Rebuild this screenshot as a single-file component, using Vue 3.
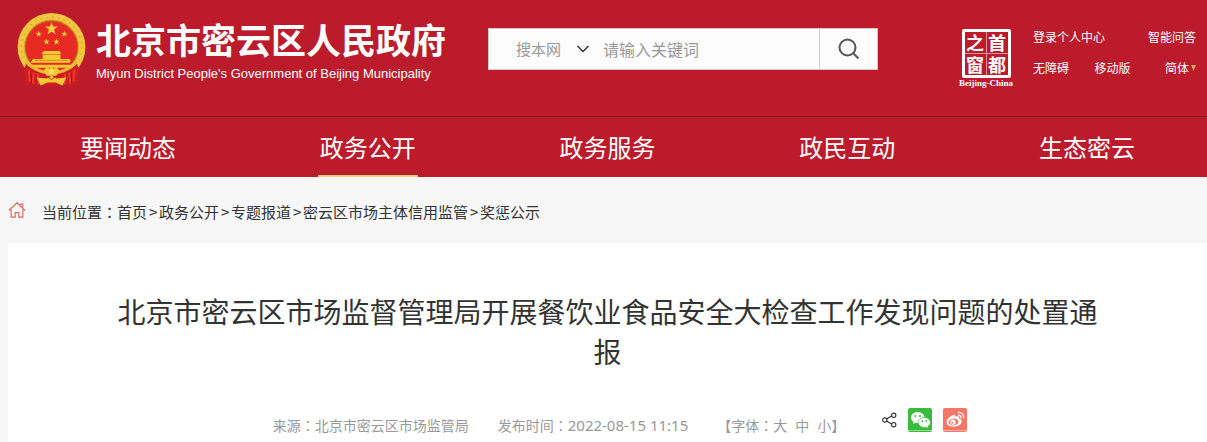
<script setup>
import { ref } from 'vue'

const nav = ['要闻动态', '政务公开', '政务服务', '政民互动', '生态密云']
const active = ref('政务公开')
const crumbs = ['首页', '政务公开', '专题报道', '密云区市场主体信用监管', '奖惩公示']
const keyword = ref('')
</script>

<template>
  <div class="page">
    <header class="header">
      <a class="brand" href="#">
        <svg class="emblem" viewBox="0 0 72 76" aria-hidden="true">
          <circle cx="35" cy="35" r="34.5" fill="#dfa126" />
          <circle cx="35" cy="35" r="31" fill="none" stroke="#f2c843" stroke-width="6" />
          <circle cx="35" cy="35" r="30.5" fill="none" stroke="#e6b035" stroke-width="2" stroke-dasharray="2 4" />
          <circle cx="35" cy="35" r="26.5" fill="#e92a24" stroke="#b76b18" stroke-width="1" />
          <path fill="#f7cf3e" d="M35 9.500l1.600 4.700h5l-4 3.100 1.500 4.900-4.100-3-4.100 3 1.500-4.900-4-3.100h5z" />
          <path id="star" fill="#f7cf3e" d="M22 18.500l.8 2.200h2.300l-1.800 1.500.7 2.300-2-1.400-2 1.400.7-2.300-1.800-1.500h2.300z" />
          <use href="#star" x="26" />
          <use href="#star" x="8" y="8" />
          <use href="#star" x="18" y="8" />
          <path fill="#f6ca35" d="M27 39h16l2 3H25zM26 43h18v4H26zM16 47h38v4H14zM12 53h46v3H12z" />
          <path d="M26 42.500h18M18 48.500h34" stroke="#d88f1a" />
          <path fill="#cf1c20" d="M9 52c5 5 10 7 16 8l10 3 10-3c6-1 11-3 16-8l2 8-2 13-7 1-6-2-5 2H27l-5-2-6 2-7-1-2-13z" />
          <path d="M12 58l1 12M17 61l-1 11M21 62l1 11M58 58l-1 12M53 61l1 11M49 62l-1 11" stroke="#ee3a30" stroke-width="2" />
          <path d="M14.500 62v10M55.500 62v10" stroke="#941517" />
          <path fill="none" stroke="#eeb934" d="M9 49c7 9 15 12 26 12s19-3 26-12" stroke-width="3" />
          <path fill="#f4c936" d="M20 66l10 1 5-3 5 3 10-1-4 8-7-3h-8l-7 3zM27 59l3-4 3 2 2-3 2 3 3-2 3 4-3 5H30z" />
          <circle cx="35" cy="60" r="2.500" fill="#f9df65" />
          <path d="M31 65l4 3 4-3" fill="none" stroke="#c72a19" />
        </svg>
        <span class="brand-text">
          <strong>北京市密云区人民政府</strong>
          <span>Miyun District People's Government of Beijing Municipality</span>
        </span>
      </a>

      <form class="search" @submit.prevent>
        <span class="scope">
          <select aria-label="搜索范围">
            <option>搜本网</option>
          </select>
          <svg viewBox="0 0 14 8" aria-hidden="true"><path d="M1.500 1l5.500 5.500L12.500 1" /></svg>
        </span>
        <input v-model="keyword" type="text" aria-label="关键词" placeholder="请输入关键词" />
        <button type="submit" aria-label="搜索">
          <svg viewBox="0 0 22 22" aria-hidden="true"><circle cx="9.500" cy="9.500" r="8" /><path d="M15 15l5.500 5.500" /></svg>
        </button>
      </form>

      <div class="tools">
        <a class="stamp" href="#" aria-label="首都之窗">
          <span class="seal">
            <span>之</span><span>首</span><span>窗</span><span>都</span>
          </span>
          <span class="seal-en">Beijing-China</span>
        </a>
        <nav class="links" aria-label="工具">
          <div><a href="#">登录个人中心</a><a href="#">智能问答</a></div>
          <div>
            <a href="#">无障碍</a><a href="#">移动版</a>
            <a class="lang" href="#">简体<svg viewBox="0 0 5 6" aria-hidden="true"><path d="M0 0h5L2.500 6z" /></svg></a>
          </div>
        </nav>
      </div>
    </header>

    <nav class="nav" aria-label="主导航">
      <a v-for="item in nav" :key="item" href="#" :class="{ active: item === active }" @click.prevent="active = item">
        <span>{{ item }}</span>
      </a>
    </nav>

    <nav class="crumbs" aria-label="当前位置">
      <svg class="home" viewBox="0 0 20 18" aria-hidden="true">
        <path d="M1 9.500L10 1l9 8.500M3.500 8.500V17H8v-5h4v5h4.500V8.500M13 2.500h3.500V6" />
      </svg>
      <span>当前位置<span class="colon">：</span></span>
      <template v-for="(c, i) in crumbs" :key="c">
        <span v-if="i" class="sep">&gt;</span><a href="#">{{ c }}</a>
      </template>
    </nav>

    <main class="article">
      <h1>北京市密云区市场监督管理局开展餐饮业食品安全大检查工作发现问题的处置通报</h1>
      <div class="meta">
        <span>来源<span class="colon">：</span>北京市密云区市场监管局</span>
        <span>发布时间<span class="colon">：</span><time datetime="2022-08-15T11:15">2022-08-15 11:15</time></span>
        <span class="sizes"><span>【字体<span class="colon">：</span></span><button type="button">大</button><button type="button">中</button><button type="button">小</button><span>】</span></span>
        <span class="share">
          <button type="button" aria-label="分享">
            <svg class="share-icon" viewBox="0 0 16 16" aria-hidden="true">
              <path d="M5 7l5.500-3.500M5 9l5.500 3.500" /><circle cx="3" cy="8" r="2.300" /><circle cx="12.500" cy="3" r="2.300" /><circle cx="12.500" cy="13" r="2.300" />
            </svg>
          </button>
          <button type="button" aria-label="分享到微信">
            <svg viewBox="0 0 24 24" aria-hidden="true">
              <rect width="24" height="24" rx="2" fill="#39bb3c" />
              <path d="M0 22.500h24" stroke="#96da95" />
              <path fill="#fff" d="M9.500 4C5.600 4 3 6.500 3 9.500c0 1.800 1 3.300 2.500 4.300L5 16l2.500-1.300c.8.200 1.500.3 2.500.3 4 0 6.500-2.500 6.500-5.500S13.500 4 9.500 4z" />
              <path fill="#fff" stroke="#39bb3c" stroke-width=".7" d="M16.300 9.500c-3.400 0-6 2.200-6 5s2.600 5 6 5c.7 0 1.400-.1 2-.3l2.200 1.200-.5-2c1.400-.9 2.300-2.300 2.300-3.900 0-2.800-2.600-5-6-5z" />
              <g fill="#39bb3c"><circle cx="7.300" cy="8" r="1" /><circle cx="12" cy="8" r="1" /><circle cx="14.300" cy="13" r=".9" /><circle cx="18.300" cy="13" r=".9" /></g>
            </svg>
          </button>
          <button type="button" aria-label="分享到微博">
            <svg viewBox="0 0 24 24" aria-hidden="true">
              <rect width="24" height="24" rx="2" fill="#f67564" />
              <path d="M0 22.500h24" stroke="#fbb5aa" />
              <path fill="#fff" d="M10 7c1.300-.5 2.600 0 2.300 1.700 2-.8 4.400-.6 3.800 1.800 1.800.5 2.600 1.500 2.600 3 0 3-3.700 5.200-8 5.200S3.500 16.700 3.500 14C3.500 11.500 7 8 10 7z" />
              <ellipse cx="10.500" cy="14" rx="5" ry="3.400" fill="#f67564" transform="rotate(-8 10.500 14)" />
              <circle cx="10" cy="14.200" r="2.600" fill="#fff" />
              <circle cx="9.300" cy="14.800" r="1" fill="#f67564" />
              <path d="M15 4.500c3.500-.7 6.500 2.300 5.500 6M15 7.300c1.900-.3 3.400 1 3 3" fill="none" stroke="#fff" stroke-width="1.300" />
            </svg>
          </button>
        </span>
      </div>
    </main>
  </div>
</template>

<style>
body {
  background: #f7f7f7;
}
</style>

<style scoped>
.page {
  font-family: "Noto Sans CJK SC", sans-serif;
  color: #333;
}
a {
  color: inherit;
  text-decoration: none;
}
button {
  padding: 0;
  border: 0;
  background: none;
  color: inherit;
  font: inherit;
  cursor: pointer;
}
svg {
  display: block;
}
.colon {
  font-family: "Noto Sans CJK TC", sans-serif;
}
.header {
  display: flex;
  align-items: flex-start;
  height: 116px;
  padding: 0 11px 0 17px;
  background: #bc1b2c;
  color: #fff;
  box-sizing: border-box;
}
.brand {
  display: flex;
  gap: 8px;
  padding-top: 12px;
}
.emblem {
  width: 71px;
  height: 76px;
}
.brand-text {
  display: flex;
  flex-direction: column;
  gap: 4px;
  width: 352px;
  padding-top: 6px;
  white-space: nowrap;
}
.brand-text strong {
  font-size: 35px;
  line-height: 42px;
}
.brand-text span {
  font: 13px/20px "Liberation Sans", sans-serif;
}
.search {
  display: flex;
  width: 390px;
  height: 42px;
  margin: 28px 0 0 40px;
  border: 1px solid #ccc;
  background: #fcfcfc;
  box-sizing: border-box;
}
.scope {
  display: flex;
  align-items: center;
  padding-left: 27px;
}
.scope select {
  width: 60px;
  padding: 0;
  border: 0;
  appearance: none;
  background: none;
  color: #999;
  font: 15px/24px "Noto Sans CJK SC", sans-serif;
}
.scope svg {
  width: 14px;
  height: 8px;
  fill: none;
  stroke: #333;
  stroke-width: 1.5;
}
.search input {
  flex: 1;
  min-width: 0;
  padding: 0 12px 0 13px;
  border: 0;
  outline: 0;
  background: none;
  font: 16px/24px "Noto Sans CJK SC", sans-serif;
}
.search input::placeholder {
  color: #999;
  opacity: 1;
}
.search button {
  display: flex;
  align-items: center;
  justify-content: center;
  width: 58px;
  border-left: 1px solid #ccc;
}
.search button svg {
  width: 22px;
  height: 22px;
  fill: none;
  stroke: #555;
  stroke-width: 2;
}
.tools {
  display: flex;
  gap: 19px;
  margin-left: auto;
  padding-top: 27px;
}
.stamp {
  display: flex;
  flex-direction: column;
  align-items: center;
  width: 56px;
  padding-top: 2px;
}
.seal {
  display: grid;
  grid-template-columns: 1fr 1fr;
  gap: 1px;
  width: 49px;
  border: 3px solid #fff;
  border-radius: 2px;
  box-sizing: border-box;
  background: #e08d96;
  font-size: 18px;
  font-weight: 700;
  line-height: 21px;
  text-align: center;
}
.seal span {
  background: #bc1b2c;
}
.seal-en {
  font: bold 9px/10px "Liberation Serif", serif;
  white-space: nowrap;
}
.links {
  display: flex;
  flex-direction: column;
  gap: 11px;
  width: 163px;
  font-size: 12px;
  line-height: 20px;
}
.links div {
  display: flex;
  justify-content: space-between;
}
.lang {
  display: flex;
  align-items: center;
  gap: 2px;
  margin-left: 9px;
}
.lang svg {
  width: 5px;
  height: 6px;
  fill: #d6a265;
}
.nav {
  display: grid;
  grid-template-columns: repeat(5, 1fr);
  padding-left: 8px;
  border-top: 1px solid #8f1520;
  background: #bc1b2c;
  color: #fff;
  font-size: 24px;
  line-height: 56px;
  text-align: center;
}
.nav span {
  display: inline-block;
  width: 100px;
  padding-top: 2px;
  border-bottom: 2px solid transparent;
}
.nav a {
  display: block;
  height: 60px;
}
.nav .active span {
  border-color: #f5cc80;
}
.crumbs {
  display: flex;
  align-items: center;
  height: 66px;
  padding: 4px 8px 0;
  font-size: 15px;
  line-height: 24px;
  box-sizing: border-box;
}
.home {
  width: 18px;
  height: 18px;
  margin: 0 16px 4px 0;
  fill: none;
  stroke: #d66a5b;
  stroke-width: 1.3;
}
.sep {
  width: 12px;
  text-align: center;
}
.article {
  margin-left: 8px;
  padding: 48px 104px 8px;
  background: #fff;
}
h1 {
  margin: 0;
  font-size: 28px;
  font-weight: 400;
  line-height: 40px;
  text-align: center;
}
.meta {
  display: flex;
  align-items: center;
  justify-content: center;
  margin-top: 37px;
  padding-left: 25px;
  color: #999;
  font-size: 14px;
  line-height: 26px;
  white-space: nowrap;
}
.meta > span {
  margin-right: 29px;
}
.meta time {
  font: 15px/26px "Noto Sans", sans-serif;
}
.sizes {
  display: flex;
}
.sizes button + button {
  margin-left: 8px;
}
.meta .share {
  display: flex;
  align-items: center;
  gap: 11px;
  margin: 0 0 10px 8px;
}
.share svg {
  width: 24px;
  height: 24px;
}
.share .share-icon {
  width: 15px;
  height: 16px;
  fill: none;
  stroke: #333;
  stroke-width: 1.2;
}
</style>
